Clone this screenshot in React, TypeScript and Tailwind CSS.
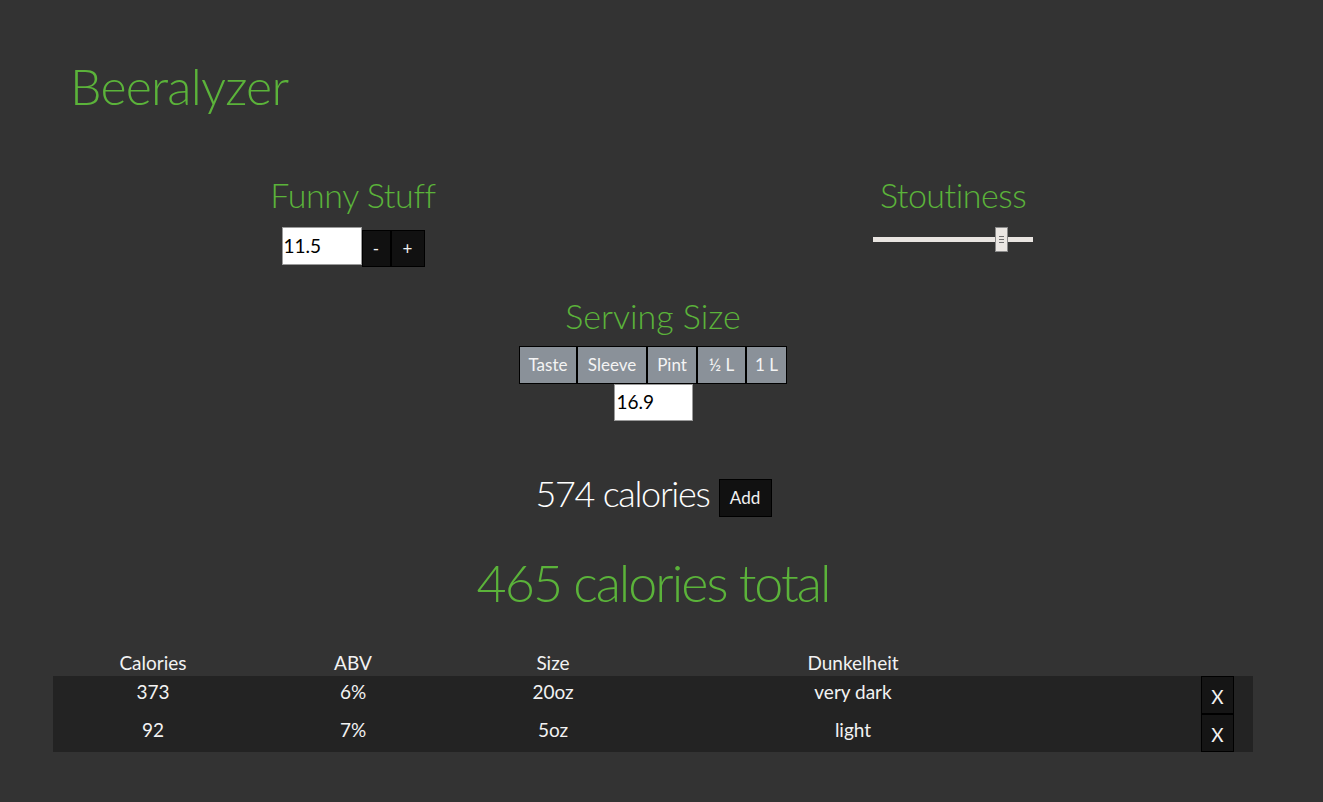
import React from "react";

const green = "text-[#5bb33a]";

function Slider() {
  return (
    <div className="relative w-[160px] h-[25px] mt-[15px]">
      <div className="absolute left-0 right-0 top-[10px] h-[5px] bg-[#e9e5e1]" />
      <div className="absolute left-[122px] top-0 w-[13px] h-[25px] bg-[#ebe7e3] border border-[#8a8a8a] flex flex-col items-center justify-center gap-[2px]">
        <div className="w-[5px] h-px bg-[#707070]" />
        <div className="w-[5px] h-px bg-[#707070]" />
        <div className="w-[5px] h-px bg-[#707070]" />
      </div>
    </div>
  );
}

const sizes = [
  { label: "Taste", w: "w-[58px]" },
  { label: "Sleeve", w: "w-[70px]" },
  { label: "Pint", w: "w-[50px]" },
  { label: "½ L", w: "w-[49px]" },
  { label: "1 L", w: "w-[41px]" },
];

const rows = [
  { cal: "373", abv: "6%", size: "20oz", dark: "very dark" },
  { cal: "92", abv: "7%", size: "5oz", dark: "light" },
];

export default function App() {
  return (
    <div
      className="min-h-screen w-full bg-[#333333] text-[#f2f2f2]"
      style={{ fontFamily: 'Lato, "Open Sans", sans-serif' }}
    >
      <div className="w-[1200px] ml-[53px] pb-[40px]">
        <h1 className={`${green} pt-[61px] pl-[17px] text-[50px] font-light leading-none tracking-[-0.8px]`}>
          Beeralyzer
        </h1>

        <div className="grid grid-cols-2 mt-[67px]">
          <div className="flex flex-col items-center">
            <h2 className={`${green} text-[34px] font-light leading-none tracking-[-0.4px]`}>Funny Stuff</h2>
            <div className="flex items-start mt-[15px]">
              <div className="w-[80px] h-[38px] bg-white border border-[#9a9a9a] text-black text-[19px] pl-[1px] flex items-center">
                11.5
              </div>
              <button className="mt-[3px] h-[37px] w-[29px] bg-[#111111] border border-black text-[17px] text-[#f2f2f2] flex items-center justify-center">
                -
              </button>
              <button className="mt-[3px] h-[37px] w-[34px] bg-[#111111] border border-black text-[17px] text-[#f2f2f2] flex items-center justify-center">
                +
              </button>
            </div>
          </div>
          <div className="flex flex-col items-center">
            <h2 className={`${green} text-[34px] font-light leading-none tracking-[-0.5px]`}>Stoutiness</h2>
            <Slider />
          </div>
        </div>

        <div className="flex flex-col items-center mt-[32px]">
          <h2 className={`${green} text-[34px] font-light leading-none`}>Serving Size</h2>
          <div className="flex mt-[13px] bg-black">
            {sizes.map((s) => (
              <button
                key={s.label}
                className={`${s.w} h-[38px] bg-[#8a9199] border border-black text-[17px] text-[#f4f4f4] flex items-center justify-center`}
              >
                {s.label}
              </button>
            ))}
          </div>
          <div className="w-[79px] h-[37px] bg-white border border-[#9a9a9a] text-black text-[19px] pl-[2px] flex items-center">
            16.9
          </div>
        </div>

        <div className="flex items-start justify-center mt-[54px] ml-[1px]">
          <span className="text-[36px] leading-none font-light text-white tracking-[-1.3px]">574 calories</span>
          <button className="ml-[9px] mt-[4px] w-[53px] h-[38px] bg-[#111111] border border-black text-[17px] text-[#f2f2f2] flex items-center justify-center">
            Add
          </button>
        </div>

        <div className={`${green} text-center text-[52px] font-light leading-none mt-[39px] tracking-[-2px]`}>
          465 calories total
        </div>

        <div className="mt-[42px] text-[19px]">
          <div className="grid grid-cols-[200px_200px_200px_400px_200px] h-[26px] leading-[26px] text-center">
            <div>Calories</div>
            <div>ABV</div>
            <div>Size</div>
            <div>Dunkelheit</div>
            <div />
          </div>
          <div className="bg-[#232323]">
            {rows.map((r) => (
              <div
                key={r.cal}
                className="grid grid-cols-[200px_200px_200px_400px_200px] h-[38px] text-center leading-[26px]"
              >
                <div className="pt-[3px]">{r.cal}</div>
                <div className="pt-[3px]">{r.abv}</div>
                <div className="pt-[3px]">{r.size}</div>
                <div className="pt-[3px]">{r.dark}</div>
                <div className="flex justify-end pr-[19px]">
                  <button className="w-[33px] h-[38px] bg-[#151515] border border-black text-[19px] text-[#f2f2f2] flex items-center justify-center pt-[4px]">
                    X
                  </button>
                </div>
              </div>
            ))}
          </div>
        </div>
      </div>
    </div>
  );
}
